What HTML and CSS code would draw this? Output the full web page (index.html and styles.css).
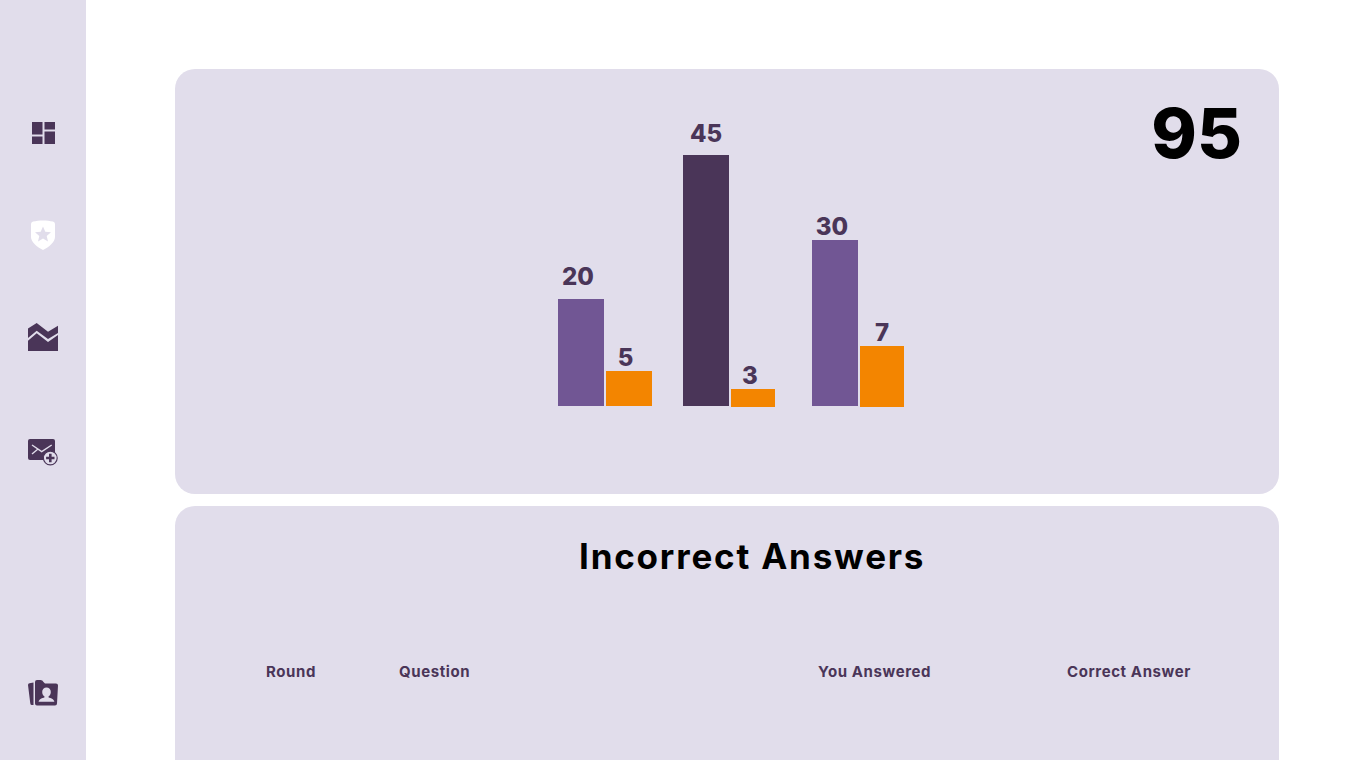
FILE: index.html
```html
<!DOCTYPE html>
<html>
<head>
  <title>Results</title>
  <link rel="stylesheet" href="styles.css">
</head>
<body>
  <nav class="sidebar">
    <a class="nav-item nav-dash">
      <svg width="23" height="22" viewBox="0 0 23 22"><path class="dark" d="M0 0h10.500v12.500H0zM0 14.500h10.500V22H0zM12.500 0H23v7.500H12.500zM12.500 9.500H23V22H12.500z"/></svg>
    </a>
    <a class="nav-item nav-shield">
      <svg width="24" height="30" viewBox="0 0 24 30"><path fill="#fff" d="M2 1.500C8 0 16 0 22 1.500q2 .5 2 2.500v13c0 5-6 10-12 13C6 27 0 22 0 17V4q0-2 2-2.500z"/><path fill="#e1ddeb" d="M12 6.500l2.300 5.200 5.700.6-4.300 3.700 1.300 5.500-5-2.900-5 2.900 1.300-5.500L4 12.300l5.700-.6z"/></svg>
    </a>
    <a class="nav-item nav-chart">
      <svg width="30" height="28" viewBox="0 0 30 28"><path class="dark" d="M0 5.500L8.700 0 20 8.700l10-6V10l-10 6L8.700 7.700 0 15zM0 17.700l8.700-7.400L20 19l10-7v16H0z"/></svg>
    </a>
    <a class="nav-item nav-mail">
      <svg width="30" height="27" viewBox="0 0 30 27"><path class="dark" d="M2 0h23q2 0 2 2v17q0 2-2 2H2q-2 0-2-2V2q0-2 2-2z"/><path d="M4 6l9.700 6.700L23.700 6M4 15l6-5" fill="none" stroke="#e1ddeb" stroke-width="1.400"/><circle cx="22.300" cy="19" r="6.900" fill="#e1ddeb" stroke="#4a3558" stroke-width="1.100"/><path d="M22.300 14.800v8.400M18.100 19h8.400" stroke="#4a3558" stroke-width="2.600"/></svg>
    </a>
    <a class="nav-item nav-folder">
      <svg width="30" height="26" viewBox="0 0 30 26"><path class="dark" d="M5.500 2.500V25H4q-1.500 0-1.700-1.500L0 5q0-1.500 1.500-1.700zM7 2q0-2 2-2h3.500q2 0 3 2L17 3.500h11q2 0 2 2L29 23.500q0 2-2 2H9q-2 0-2-2z"/><path fill="#e1ddeb" d="M18.500 7.500a4.300 4.300 0 0 1 4.300 4.500c0 2.200-1 3.700-2.200 4.300v1.200c2 .7 5.200 1.200 5.800 4.200H10.600c.6-3 3.800-3.500 5.800-4.200v-1.200c-1.200-.6-2.200-2.100-2.200-4.300a4.300 4.300 0 0 1 4.300-4.500z"/></svg>
    </a>
  </nav>

  <main class="content">
    <section class="card card-chart">
      <div class="chart">
        <div class="group group-a">
          <div class="col"><span class="num num-20">20</span><div class="bar purple h-107"></div></div>
          <div class="col"><span class="num num-5">5</span><div class="bar orange h-35"></div></div>
        </div>
        <div class="group group-b">
          <div class="col"><span class="num num-45">45</span><div class="bar dark-bar h-251"></div></div>
          <div class="col narrow low"><span class="num num-3">3</span><div class="bar orange h-18"></div></div>
        </div>
        <div class="group group-c">
          <div class="col"><span class="num num-30">30</span><div class="bar purple h-166"></div></div>
          <div class="col narrow low"><span class="num num-7">7</span><div class="bar orange h-61"></div></div>
        </div>
      </div>
      <div class="score">95</div>
    </section>

    <section class="card card-table">
      <h1>Incorrect Answers</h1>
      <div class="table-head">
        <span class="th-round">Round</span>
        <span class="th-question">Question</span>
        <span class="th-you">You Answered</span>
        <span class="th-correct">Correct Answer</span>
      </div>
    </section>
  </main>
</body>
</html>
```

FILE: styles.css
```css
body { margin: 0; height: 760px; overflow: hidden; display: flex; background: white; font-family: "Inter", "Open Sans", sans-serif; color: #4a3558; }
.dark { fill: #4a3558; }

.sidebar { width: 86px; height: 760px; background: #e1ddeb; display: flex; flex-direction: column; align-items: center; flex-shrink: 0; }
.nav-item { display: block; line-height: 0; }
.nav-dash { margin-top: 122px; }
.nav-shield { margin-top: 76px; }
.nav-chart { margin-top: 73px; }
.nav-mail { margin-top: 88px; }
.nav-folder { margin-top: 214px; }

.content { margin-left: 89px; width: 1104px; height: 760px; padding-top: 69px; box-sizing: border-box; display: flex; flex-direction: column; }
.card { background: #e1ddeb; border-radius: 20px; }
.card-chart { height: 425px; flex-shrink: 0; display: flex; justify-content: space-between; align-items: flex-start; }
.card-table { margin-top: 12px; flex: 1; border-radius: 20px 20px 0 0; }

.chart { margin-left: 383px; height: 337px; display: flex; align-items: flex-end; }
.group { display: flex; align-items: flex-end; gap: 2px; }
.group-b { margin-left: 31px; }
.group-c { margin-left: 37px; }
.col { width: 46px; display: flex; flex-direction: column; align-items: center; }
.narrow { width: 44px; }
.low { margin-bottom: -1px; }
.num { font-size: 24px; font-weight: 800; line-height: 30px; }
.num-20 { margin: 0 6px 7px 0; }
.num-5 { margin: 0 7px -2px 0; }
.num-45 { margin-bottom: 6px; }
.num-3 { margin: 0 6px -2px 0; }
.num-30 { margin: 0 6px -2px 0; }
.num-7 { margin-bottom: -2px; }
.bar { width: 100%; }
.purple { background: #715694; }
.orange { background: #f38500; }
.dark-bar { background: #4a3558; }
.h-107 { height: 107px; }
.h-35 { height: 35px; }
.h-251 { height: 251px; }
.h-18 { height: 18px; }
.h-166 { height: 166px; }
.h-61 { height: 61px; }

.score { margin: 17px 37px 0 0; font-size: 69px; line-height: 94px; font-weight: 800; color: black; }

h1 { margin: 0; padding-top: 27px; padding-left: 404px; font-size: 35px; line-height: 46px; font-weight: 700; letter-spacing: 1.8px; color: black; white-space: nowrap; }
.table-head { display: flex; margin-top: 83px; font-size: 15px; line-height: 20px; font-weight: 700; letter-spacing: 0.6px; white-space: nowrap; }
.th-round { margin-left: 91px; width: 133px; }
.th-question { width: 419px; }
.th-you { width: 249px; }
```
